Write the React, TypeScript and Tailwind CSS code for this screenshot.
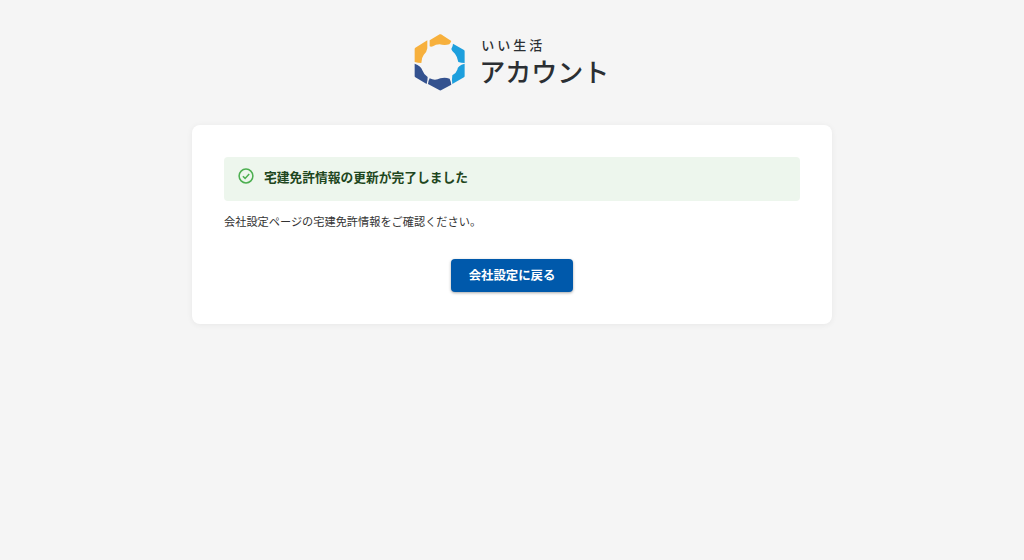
import React from "react";

const cjk = "font-['Noto_Sans_CJK_JP','Noto_Sans_CJK_SC',sans-serif]";

// hexagon logo, six segments around a white-ish ring
const Logo = () => (
  <svg width="53.3" height="58.7" viewBox="40 38 160 176" fill="none" className="shrink-0">
    <path d="M90 60 L120 42 Q122 41 124 42 L155 62 Q153 68 149 72 Q135 76 120 72 Q108 72 100 78 Q94 80 90 78 Z" fill="#F7B03C" />
    <path d="M83 60 L47 82 Q45 83 45 86 V125 Q55 128 65 128 Q65 113 72 104 Q82 94 83 84 Z" fill="#F7B03C" />
    <path d="M160 70 L193 89 Q195 90 195 93 V128 Q185 128 176 125 Q174 110 166 100 Q157 94 155 86 Q160 78 160 70 Z" fill="#1D9FDD" />
    <path d="M195 130 V168 Q195 170 193 171 L158 191 Q156 178 158 165 Q170 158 173 148 Q174 136 195 130 Z" fill="#1D9FDD" />
    <path d="M45 130 V168 Q45 170 47 171 L81 191 Q84 180 84 170 Q72 162 68 150 Q64 136 45 130 Z" fill="#34528F" />
    <path d="M85 191 L120 210 Q122 211 124 210 L155 193 Q154 184 150 175 Q136 170 122 174 Q106 182 90 174 Q86 182 85 191 Z" fill="#34528F" />
  </svg>
);

const App = () => {
  return (
    <div className={`min-h-screen bg-[#f5f5f5] ${cjk} text-[#333333]`}>
      <div className="flex flex-col items-center pt-[33px]">
        {/* Logo */}
        <div className="flex items-center gap-[13px] h-[59px] pr-[2px]">
          <Logo />
          <div className="flex flex-col mb-[1px] text-[#2b2f33]">
            <span className="ml-[2px] text-[13px] leading-[16px] font-medium tracking-[3px]">いい生活</span>
            <span className="text-[26px] leading-[32px] font-medium mt-[2px]">アカウント</span>
          </div>
        </div>

        {/* Card */}
        <div className="w-[640px] h-[199px] mt-[33px] bg-white rounded-lg p-8 shadow-[0_1px_6px_rgba(0,0,0,0.06)]">
          <div className="h-11 flex items-center bg-[#edf6ed] rounded pl-[14px] pb-1">
            <svg width="16" height="16" viewBox="0 0 16 16" fill="none" className="mb-[2px]">
              <circle cx="8" cy="8" r="6.9" stroke="#4CAF50" strokeWidth="1.5" />
              <path d="M4.9 8.2 L7.1 10.4 L11.2 6" stroke="#4CAF50" strokeWidth="1.5" />
            </svg>
            <span className="ml-[10px] text-[12.75px] font-bold text-[#1e4620]">宅建免許情報の更新が完了しました</span>
          </div>
          <p className="mt-[10px] text-[11.2px] leading-[20px] text-[#333333]">
            会社設定ページの宅建免許情報をご確認ください。
          </p>
          <div className="flex justify-center mt-[28px]">
            <button className="w-[122px] h-[33px] bg-[#0059ab] text-white rounded text-[12.4px] font-bold shadow-[0_1px_3px_rgba(0,0,0,0.35)]">
              会社設定に戻る
            </button>
          </div>
        </div>
      </div>
    </div>
  );
};

export default App;
